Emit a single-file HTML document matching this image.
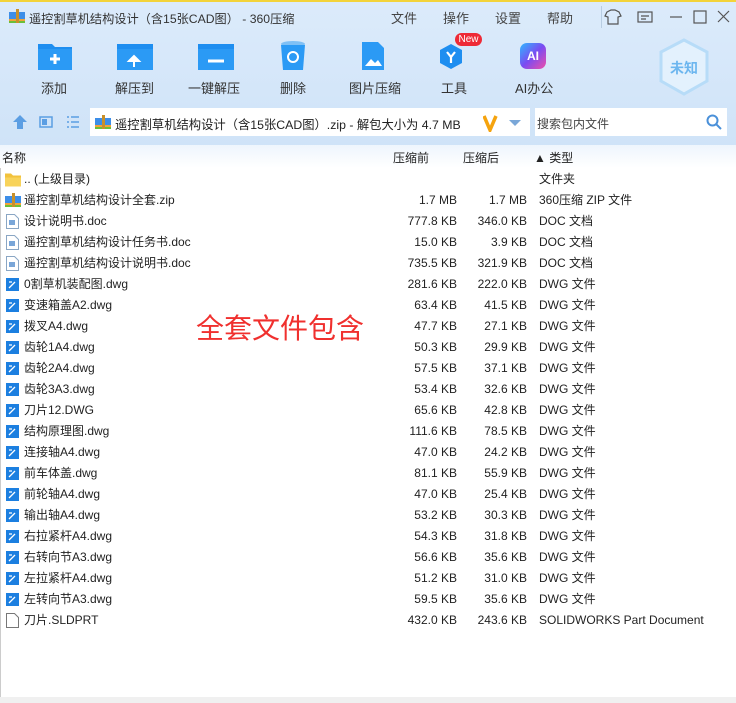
<!DOCTYPE html>
<html><head><meta charset="utf-8"><style>
*{margin:0;padding:0;box-sizing:border-box}
body{width:736px;height:703px;overflow:hidden;font-family:"Liberation Sans","Noto Sans CJK SC",sans-serif;font-size:12px;color:#222;background:#fff;position:relative}
.top{position:absolute;left:0;top:0;width:736px;height:145px;background:linear-gradient(#dcebfb,#cfe3f8)}
.ys{position:absolute;left:0;top:0;width:736px;height:2px;background:#f3d33a}
.a{position:absolute;white-space:nowrap}
.tb{position:absolute;top:40px;width:40px;height:32px}
.lbl{position:absolute;top:78px;font-size:13px;color:#333;white-space:nowrap}
.row{position:absolute;left:0;width:736px;height:21px;font-size:12px;line-height:21px}
.row .n{position:absolute;left:24px}
.row .b{position:absolute;right:279px}
.row .c{position:absolute;right:209px}
.row .t{position:absolute;left:539px}
.ic{position:absolute;left:6px;top:3px;width:13px;height:15px}
</style></head><body>
<div class="top"></div><div class="ys"></div>
<svg class="a" style="left:9px;top:9px" width="16" height="15"><rect x="0" y="3" width="16" height="11" fill="#3d8ee8"/><rect x="0" y="10" width="16" height="4" fill="#f2a33a"/><rect x="0" y="12" width="16" height="2" fill="#6bbf3a"/><rect x="7" y="0" width="3" height="14" fill="#c8902a"/></svg>
<div class="a" style="left:29px;top:9px;font-size:12.2px;color:#333">遥控割草机结构设计（含15张CAD图） - 360压缩</div>
<div class="a" style="left:391px;top:8px;font-size:13px;color:#444">文件</div>
<div class="a" style="left:443px;top:8px;font-size:13px;color:#444">操作</div>
<div class="a" style="left:495px;top:8px;font-size:13px;color:#444">设置</div>
<div class="a" style="left:547px;top:8px;font-size:13px;color:#444">帮助</div>
<div class="a" style="left:601px;top:6px;width:1px;height:22px;background:#b8cde2"></div>
<svg class="a" style="left:604px;top:8px" width="130" height="18" fill="none" stroke="#555" stroke-width="1.2"><path d="M3 4l4-2h4l4 2 2 4-3 1v7H4V9L1 8z"/><rect x="34" y="4" width="14" height="10"/><path d="M37 8h8M37 11h5"/><path d="M66 9h12"/><rect x="90" y="3" width="12" height="12"/><path d="M114 3l11 11M125 3l-11 11"/></svg>
<svg class="tb" style="left:36px" viewBox="0 0 40 32"><path d="M2 4h14l3 3h17v23H2z" fill="#1e8ef0"/><path d="M2 9h34v21H2z" fill="#2b9af5"/><path d="M19 14v10M14 19h10" stroke="#fff" stroke-width="3"/></svg>
<div class="lbl" style="left:41px">添加</div>
<svg class="tb" style="left:115px" viewBox="0 0 40 32"><path d="M2 4h36v26H2z" fill="#1e8ef0"/><path d="M2 9h36v21H2z" fill="#2b9af5"/><path d="M19 27v-8M14 21l5-5 5 5z" fill="#fff" stroke="#fff" stroke-width="2"/></svg>
<div class="lbl" style="left:115px">解压到</div>
<svg class="tb" style="left:196px" viewBox="0 0 40 32"><path d="M2 4h36v26H2z" fill="#1e8ef0"/><path d="M2 9h36v21H2z" fill="#2b9af5"/><path d="M12 21h16" stroke="#fff" stroke-width="3"/></svg>
<div class="lbl" style="left:188px">一键解压</div>
<svg class="tb" style="left:273px" viewBox="0 0 40 32"><ellipse cx="20" cy="4" rx="12" ry="3" fill="#7fc0f5"/><path d="M8 5h24l-2 25H10z" fill="#2b9af5"/><circle cx="20" cy="17" r="5" fill="none" stroke="#fff" stroke-width="2"/></svg>
<div class="lbl" style="left:280px">删除</div>
<svg class="tb" style="left:352px" viewBox="0 0 40 32"><path d="M10 2h16l6 6v22H10z" fill="#2b9af5"/><path d="M13 26l6-7 4 4 3-3 4 6z" fill="#fff"/></svg>
<div class="lbl" style="left:349px">图片压缩</div>
<svg class="tb" style="left:433px" viewBox="0 0 40 32"><path d="M18 4l11 6v13l-11 6-11-6V10z" fill="#1e8ef0"/><path d="M14 12l4 5 4-5M18 17v6" stroke="#fff" stroke-width="2.2" fill="none"/></svg>
<div class="a" style="left:455px;top:33px;width:27px;height:13px;background:#ee2a36;border-radius:7px;color:#fff;font-size:10px;line-height:13px;text-align:center">New</div>
<div class="lbl" style="left:441px">工具</div>
<div class="a" style="left:520px;top:43px;width:26px;height:26px;border-radius:7px;background:linear-gradient(135deg,#2fb8ff,#7a4cf2,#f04fa8);color:#fff;font-weight:bold;font-size:12px;line-height:26px;text-align:center">AI</div>
<div class="lbl" style="left:515px">AI办公</div>
<svg class="a" style="left:658px;top:38px" width="52" height="58"><path d="M26 2l23 12v29L26 56 3 43V14z" fill="#e3f1fd" stroke="#b7dcf8" stroke-width="3"/></svg>
<div class="a" style="left:670px;top:58px;font-size:14px;font-weight:bold;color:#6cb6ef">未知</div>
<svg class="a" style="left:12px;top:114px" width="72" height="16"><path d="M8 1l7 7h-4v7H5V8H1z" fill="#5b9ee3"/><rect x="28" y="3" width="12" height="10" fill="none" stroke="#5b9ee3" stroke-width="1.5"/><rect x="30" y="5" width="5" height="6" fill="#5b9ee3"/><path d="M55 3h2M55 8h2M55 13h2M59 3h8M59 8h8M59 13h8" stroke="#5b9ee3" stroke-width="1.6"/></svg>
<div class="a" style="left:90px;top:108px;width:440px;height:28px;background:#fff"></div>
<svg class="a" style="left:95px;top:115px" width="16" height="15"><rect x="0" y="3" width="16" height="11" fill="#3d8ee8"/><rect x="0" y="10" width="16" height="4" fill="#f2a33a"/><rect x="0" y="12" width="16" height="2" fill="#6bbf3a"/><rect x="7" y="0" width="3" height="14" fill="#c8902a"/></svg>
<div class="a" style="left:115px;top:115px;font-size:12.3px">遥控割草机结构设计（含15张CAD图）.zip - 解包大小为 4.7 MB</div>
<svg class="a" style="left:483px;top:114px" width="40" height="18"><path d="M1 2l6 14 6-14" stroke="#f5a30e" stroke-width="3.5" fill="none"/><path d="M26 6h12l-6 6z" fill="#7aa7d8"/></svg>
<div class="a" style="left:535px;top:108px;width:192px;height:28px;background:#fff"></div>
<div class="a" style="left:537px;top:115px;font-size:12px;color:#444">搜索包内文件</div>
<svg class="a" style="left:706px;top:114px" width="16" height="16"><circle cx="6.5" cy="6.5" r="5" stroke="#4a90d9" stroke-width="2" fill="none"/><path d="M10 10l5 5" stroke="#4a90d9" stroke-width="2"/></svg>
<div class="a" style="left:0;top:145px;width:736px;height:23px;background:linear-gradient(#eef5fd,#fff)"></div>
<div class="a" style="left:2px;top:149px">名称</div>
<div class="a" style="left:393px;top:149px">压缩前</div>
<div class="a" style="left:463px;top:149px">压缩后</div>
<div class="a" style="left:534px;top:149px">▲ 类型</div>
<div class="a" style="left:0;top:697px;width:736px;height:6px;background:#f0f0f0"></div>
<div class="a" style="left:0;top:168px;width:1px;height:529px;background:#ccc"></div>
<div class="a" style="left:196px;top:307px;font-size:28px;color:#f0302e">全套文件包含</div>
<div id="rows"></div>
<div class="row" style="top:169px"><svg class="ic" style="width:16px;left:5px" viewBox="0 0 16 14"><path d="M0 1h6l2 2h8v11H0z" fill="#f2c23c"/><path d="M0 5h16v9H0z" fill="#f8d35a"/></svg><span class="n">.. (上级目录)</span><span class="t">文件夹</span></div>
<div class="row" style="top:190px"><svg class="ic" style="width:16px;left:5px" viewBox="0 0 16 15"><rect x="0" y="3" width="16" height="11" fill="#3d8ee8"/><rect x="0" y="10" width="16" height="4" fill="#f2a33a"/><rect x="0" y="12" width="16" height="2" fill="#6bbf3a"/><rect x="7" y="0" width="3" height="14" fill="#c8902a"/></svg><span class="n">遥控割草机结构设计全套.zip</span><span class="b">1.7 MB</span><span class="c">1.7 MB</span><span class="t">360压缩 ZIP 文件</span></div>
<script>
var d=[["D","设计说明书.doc","777.8 KB","346.0 KB","DOC 文档"],["D","遥控割草机结构设计任务书.doc","15.0 KB","3.9 KB","DOC 文档"],["D","遥控割草机结构设计说明书.doc","735.5 KB","321.9 KB","DOC 文档"],
["G","0割草机装配图.dwg","281.6 KB","222.0 KB"],["G","变速箱盖A2.dwg","63.4 KB","41.5 KB"],["G","拨叉A4.dwg","47.7 KB","27.1 KB"],["G","齿轮1A4.dwg","50.3 KB","29.9 KB"],["G","齿轮2A4.dwg","57.5 KB","37.1 KB"],["G","齿轮3A3.dwg","53.4 KB","32.6 KB"],["G","刀片12.DWG","65.6 KB","42.8 KB"],["G","结构原理图.dwg","111.6 KB","78.5 KB"],["G","连接轴A4.dwg","47.0 KB","24.2 KB"],["G","前车体盖.dwg","81.1 KB","55.9 KB"],["G","前轮轴A4.dwg","47.0 KB","25.4 KB"],["G","输出轴A4.dwg","53.2 KB","30.3 KB"],["G","右拉紧杆A4.dwg","54.3 KB","31.8 KB"],["G","右转向节A3.dwg","56.6 KB","35.6 KB"],["G","左拉紧杆A4.dwg","51.2 KB","31.0 KB"],["G","左转向节A3.dwg","59.5 KB","35.6 KB"],["S","刀片.SLDPRT","432.0 KB","243.6 KB","SOLIDWORKS Part Document"]];
var h="";d.forEach(function(r,i){var ic;
if(r[0]=="D")ic='<svg class="ic" viewBox="0 0 13 15"><path d="M.5.5h8l4 4v10H.5z" fill="#fff" stroke="#8aa6c4"/><rect x="3" y="6" width="6" height="5" fill="#7aa6d8"/></svg>';
else if(r[0]=="G")ic='<svg class="ic" viewBox="0 0 13 15"><rect x="0" y="1" width="13" height="13" fill="#1c7fe0"/><path d="M3 11l6-6M3 5h3" stroke="#fff" stroke-width="1.3"/></svg>';
else ic='<svg class="ic" viewBox="0 0 13 15"><path d="M.5.5h8l4 4v10H.5z" fill="#fff" stroke="#777"/></svg>';
h+='<div class="row" style="top:'+(211+21*i)+'px">'+ic+'<span class="n">'+r[1]+'</span><span class="b">'+r[2]+'</span><span class="c">'+r[3]+'</span><span class="t">'+(r[4]||"DWG 文件")+'</span></div>';});
document.getElementById("rows").innerHTML=h;
</script>
</body></html>
